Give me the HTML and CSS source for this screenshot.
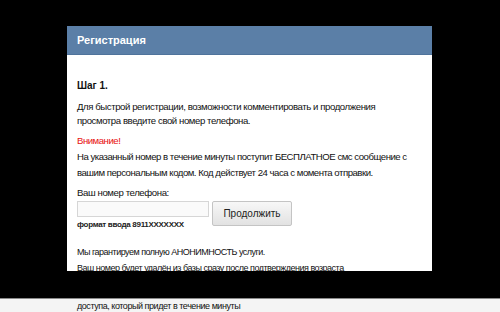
FILE: index.html
```html
<!DOCTYPE html>
<html lang="ru">
<head>
  <meta charset="UTF-8" />
  <meta name="viewport" content="width=device-width,initial-scale=1.0" />
  <title>Регистрация</title>
  <link rel="stylesheet" href="styles.css">
</head>
<body>
  <div class="screen">
    <div class="dialog">
      <div class="dialog-title">Регистрация</div>
      <div class="dialog-body">
        <h3 class="step">Шаг 1.</h3>
        <p class="lead">Для быстрой регистрации, возможности комментировать и продолжения<br>просмотра введите свой номер телефона.</p>
        <div class="notice">
          <div class="warn">Внимание!</div>
          <p>На указанный номер в течение минуты поступит БЕСПЛАТНОЕ смс сообщение с<br>вашим персональным кодом. Код действует 24 часа с момента отправки.</p>
        </div>
        <label class="phone-label" for="phone">Ваш номер телефона:</label>
        <div class="phone-row">
          <div class="phone-field">
            <input class="phone-input" id="phone" type="text">
            <div class="hint">формат ввода 8911XXXXXXX</div>
          </div>
          <button class="btn-next">Продолжить</button>
        </div>
        <p class="small first">Мы гарантируем полную АНОНИМНОСТЬ услуги.</p>
        <p class="small">Ваш номер будет удалён из базы сразу после подтверждения возраста</p>
      </div>
    </div>
  </div>
  <div class="strip">
    <p class="small">доступа, который придет в течение минуты</p>
  </div>
</body>
</html>
```

FILE: styles.css
```css
body {
  margin: 0;
  background-color: #f4f4f4;
  font-family: "Liberation Sans", Arial, sans-serif;
  color: #111;
  overflow: hidden;
  white-space: nowrap;
}
.screen {
  background-color: #000;
  height: 272px;
  padding: 26px 0 0 67px;
  border-bottom: 1px solid #8a8a8a;
}
.dialog {
  width: 365px;
  height: 245px;
  background-color: #fff;
  overflow: hidden;
}
.dialog-title {
  height: 28px;
  line-height: 29px;
  background-color: #5b7fa7;
  border-bottom: 1px solid #4f739b;
  color: #fff;
  font-weight: bold;
  font-size: 11px;
  padding-left: 10px;
}
.dialog-body {
  padding: 24px 10px 0;
}
.step {
  margin: 0 0 7px;
  font-size: 10px;
  font-weight: bold;
  line-height: 14px;
}
.lead {
  margin: 0;
  font-size: 9.6px;
  letter-spacing: -0.42px;
  line-height: 14px;
}
.notice {
  margin-top: 5px;
  font-size: 9.6px;
  letter-spacing: -0.48px;
  line-height: 16px;
}
.notice p {
  margin: 0;
}
.warn {
  color: #e81010;
}
.phone-label {
  display: block;
  margin-top: 5px;
  font-size: 9.6px;
  letter-spacing: -0.4px;
  line-height: 14px;
}
.phone-row {
  display: flex;
  align-items: flex-start;
  gap: 3px;
  margin-top: 1px;
}
.phone-input {
  display: block;
  box-sizing: border-box;
  width: 132px;
  height: 16px;
  margin: 0;
  padding: 0;
  border: 1px solid #d6d6d6;
  background-color: #fafafa;
}
.btn-next {
  box-sizing: border-box;
  width: 80px;
  height: 25px;
  margin: 0;
  padding: 0;
  border: 1px solid #c4c4c4;
  border-radius: 2px;
  background: linear-gradient(#f7f7f7, #e2e2e2);
  font-family: inherit;
  font-size: 10px;
  color: #222;
}
.hint {
  margin-top: 3px;
  font-size: 8px;
  font-weight: bold;
  line-height: 10px;
  letter-spacing: -0.3px;
  color: #222;
}
.small {
  margin: 0;
  font-size: 9px;
  letter-spacing: -0.5px;
  line-height: 16px;
}
.small.first {
  margin-top: 14px;
}
.strip {
  padding-left: 77px;
}
.strip .small {
  margin-top: 1px;
  line-height: 12px;
  letter-spacing: -0.45px;
}
```
